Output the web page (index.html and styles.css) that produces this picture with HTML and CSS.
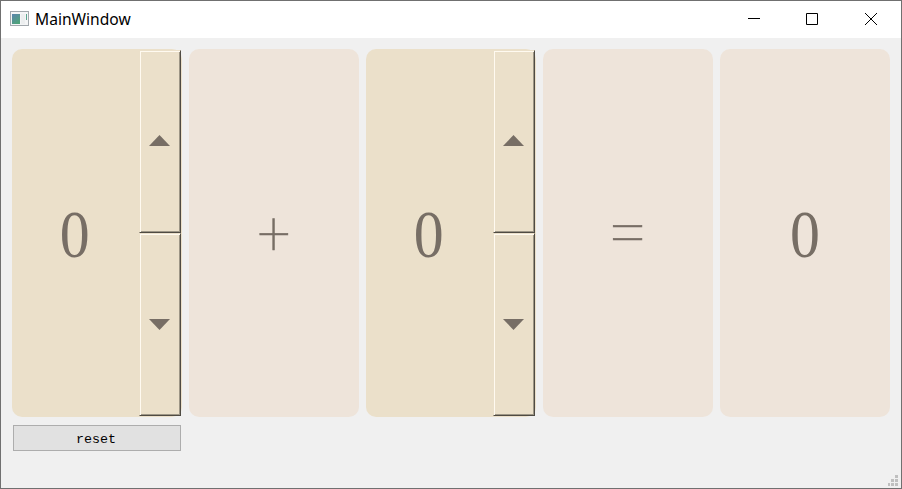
FILE: index.html
```html
<!DOCTYPE html>
<html lang="en">
<head>
<meta charset="utf-8">
<title>MainWindow</title>
<link rel="stylesheet" href="styles.css">
</head>
<body>
<div class="window">
  <header class="titlebar">
    <svg class="app-icon" width="19" height="16" viewBox="0 0 19 16">
      <defs><linearGradient id="g" x1="0" y1="0" x2=".6" y2="1"><stop offset="0" stop-color="#5b83ae"/><stop offset="1" stop-color="#4fa37a"/></linearGradient></defs>
      <rect x=".5" y=".5" width="18" height="14" fill="#f4f5f6" stroke="#a2a8ad"/>
      <rect x="2" y="3" width="8" height="10" fill="url(#g)"/>
      <rect x="11" y="3" width="4" height="10" fill="#eceeef"/>
      <rect x="16" y="3" width="1" height="6" fill="#5ba58e"/>
    </svg>
    <h1 class="title">MainWindow</h1>
    <div class="controls">
      <svg width="12" height="12" viewBox="0 0 12 12"><path d="M0 5.5H12"/></svg>
      <svg width="12" height="12" viewBox="0 0 12 12"><path d="M.5 .5H11.5V11.5H.5Z"/></svg>
      <svg width="12" height="12" viewBox="0 0 12 12"><path d="M0 0L12 12M12 0L0 12"/></svg>
    </div>
  </header>
  <main class="cards">
    <div class="card spin">
      <span class="value"><span class="digit">0</span></span>
      <div class="steps">
        <button class="step"><svg width="21" height="11" viewBox="0 0 21 11"><path d="M0 11L10.5 0L21 11Z"/></svg></button>
        <button class="step"><svg width="21" height="11" viewBox="0 0 21 11"><path d="M0 0H21L10.5 11Z"/></svg></button>
      </div>
    </div>
    <div class="card"><span class="operator plus">+</span></div>
    <div class="card spin">
      <span class="value"><span class="digit">0</span></span>
      <div class="steps">
        <button class="step"><svg width="21" height="11" viewBox="0 0 21 11"><path d="M0 11L10.5 0L21 11Z"/></svg></button>
        <button class="step"><svg width="21" height="11" viewBox="0 0 21 11"><path d="M0 0H21L10.5 11Z"/></svg></button>
      </div>
    </div>
    <div class="card"><span class="operator equals">=</span></div>
    <div class="card"><span class="digit">0</span></div>
  </main>
  <button class="reset">reset</button>
  <svg class="grip" width="10" height="11" viewBox="0 0 10 11"><path d="M7 0h3v3H7zM3 4h3v3H3zM7 4h3v3H7zM0 8h2v3H0zM3 8h3v3H3zM7 8h3v3H7z"/></svg>
</div>
</body>
</html>
```
FILE: styles.css
```css
* { box-sizing: border-box; }
body { margin: 0; overflow: hidden; }
.window {
  position: relative;
  width: 902px;
  height: 489px;
  border: 1px solid #707070;
  background: #f0f0f0;
}
.titlebar {
  display: flex;
  align-items: center;
  height: 37px;
  padding: 0 24px 0 9px;
  background: #fff;
}
.app-icon { margin-bottom: 1px; }
.title {
  margin: 0 0 0 6px;
  font: 400 15.6px/37px "Noto Sans", sans-serif;
  color: #000;
}
.controls { display: flex; gap: 47px; margin: 0 0 1px auto; }
.controls svg { fill: none; stroke: #000; stroke-width: 1; }
.controls svg:first-child { margin-right: -1px; }
.cards {
  display: grid;
  grid-template-columns: repeat(5, 170px);
  gap: 7px;
  height: 368px;
  margin: 11px 0 0 11px;
}
.card {
  display: flex;
  align-items: center;
  justify-content: center;
  border-radius: 10px;
  background: #eee4da;
  color: #776e65;
}
.spin { background: #ebe0ca; justify-content: flex-start; }
.value { display: flex; flex: 0 0 127px; justify-content: center; }
.digit {
  font: 400 68px/72px "Liberation Serif", serif;
  transform: translateY(.5px) scaleX(.88);
}
.value .digit { transform: translate(-1.2px, 1px) scaleX(.88); }
.operator { font: 100 57px/72px Roboto, sans-serif; -webkit-text-stroke: .6px #776e65; }
.plus { transform: scale(1.01, 1.08); }
.equals { transform: scale(1.23, 1.13); }
.steps { width: 42px; height: 366px; }
.step {
  display: flex;
  align-items: center;
  justify-content: center;
  width: 42px;
  height: 183px;
  padding: 0 2px 0 0;
  border: 1px solid;
  border-color: #ebe0ca #4f4b43 #4f4b43 #ebe0ca;
  background: #ebe0ca;
  box-shadow: inset 1px 1px #fffaf0, inset -1px -1px #9d9686;
}
.step:first-child { padding-bottom: 2px; }
.step svg { fill: #776e65; }
.reset {
  display: block;
  width: 168px;
  height: 26px;
  margin: 8px 0 0 12px;
  padding: 3px 2px 0 0;
  border: 1px solid #adadad;
  background: #e1e1e1;
  color: #000;
  font: 400 13.33px/16px "Liberation Mono", monospace;
}
.grip { position: absolute; right: 3px; bottom: 2px; fill: #bfbfbf; }
```
